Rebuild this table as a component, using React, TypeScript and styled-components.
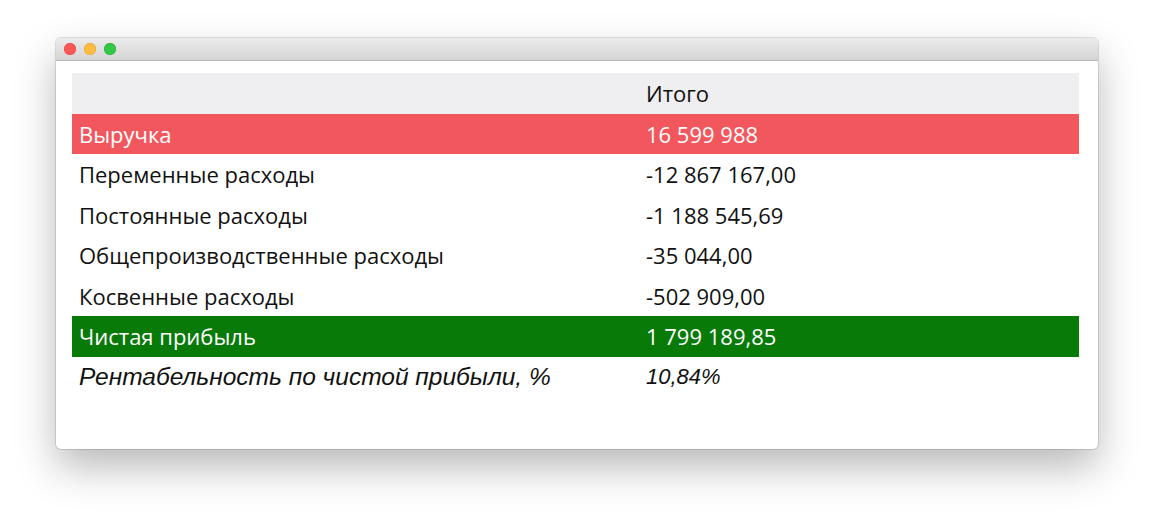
import React from "react";
import styled, { createGlobalStyle } from "styled-components";

const GlobalStyle = createGlobalStyle`
  html, body {
    margin: 0;
    padding: 0;
    background: #ffffff;
  }
`;

const Page = styled.div`
  width: 1154px;
  height: 524px;
  padding: 38px 56px 0 56px;
  box-sizing: border-box;
`;

const Window = styled.div`
  width: 1042px;
  height: 411px;
  background: #ffffff;
  border-radius: 5px;
  box-shadow: 0 0 0 1px rgba(0, 0, 0, 0.12), 0 18px 40px rgba(0, 0, 0, 0.28);
  overflow: hidden;
  display: flex;
  flex-direction: column;
`;

const TitleBar = styled.div`
  height: 22px;
  flex-shrink: 0;
  background: linear-gradient(#ebebeb, #d5d5d5);
  border-bottom: 1px solid #b8b8b8;
  display: flex;
  align-items: center;
  gap: 8px;
  padding-left: 8px;
`;

const Light = styled.span<{ $color: string; $border: string }>`
  width: 12px;
  height: 12px;
  border-radius: 50%;
  background: ${(p) => p.$color};
  box-shadow: inset 0 0 0 0.5px ${(p) => p.$border};
`;

const Content = styled.div`
  padding: 12px 19px 0 16px;
`;

const Table = styled.table`
  width: 100%;
  border-collapse: collapse;
  font-family: "Open Sans", "Noto Sans", sans-serif;
  font-size: 22px;
  color: #111;
`;

const Row = styled.tr<{ $bg?: string; $light?: boolean; $italic?: boolean }>`
  height: 40.5px;
  background: ${(p) => p.$bg || "transparent"};
  color: ${(p) => (p.$light ? "#ffffff" : "#111111")};
  font-family: ${(p) =>
    p.$italic ? '"Liberation Sans", Arial, sans-serif' : "inherit"};
  font-style: ${(p) => (p.$italic ? "italic" : "normal")};
  font-size: ${(p) => (p.$italic ? "24.5px" : "22px")};
`;

const Cell = styled.td<{ $small?: boolean }>`
  padding: 0 7px;
  vertical-align: middle;
  line-height: 1;
  ${(p) => (p.$small ? "font-size: 22px;" : "")}
  &:first-child {
    width: 553px;
  }
`;

const rows = [
  { label: "Переменные расходы", value: "-12 867 167,00" },
  { label: "Постоянные расходы", value: "-1 188 545,69" },
  { label: "Общепроизводственные расходы", value: "-35 044,00" },
  { label: "Косвенные расходы", value: "-502 909,00" },
];

export default function App() {
  return (
    <Page>
      <GlobalStyle />
      <Window>
        <TitleBar>
          <Light $color="#fc5753" $border="#df4744" />
          <Light $color="#fdbc40" $border="#de9f34" />
          <Light $color="#33c748" $border="#27aa35" />
        </TitleBar>
        <Content>
          <Table>
            <tbody>
              <Row $bg="#efeef0">
                <Cell />
                <Cell>Итого</Cell>
              </Row>
              <Row $bg="#f2575d" $light>
                <Cell>Выручка</Cell>
                <Cell>16 599 988</Cell>
              </Row>
              {rows.map((r) => (
                <Row key={r.label}>
                  <Cell>{r.label}</Cell>
                  <Cell>{r.value}</Cell>
                </Row>
              ))}
              <Row $bg="#077a08" $light>
                <Cell>Чистая прибыль</Cell>
                <Cell>1 799 189,85</Cell>
              </Row>
              <Row $italic>
                <Cell>Рентабельность по чистой прибыли, %</Cell>
                <Cell $small>10,84%</Cell>
              </Row>
            </tbody>
          </Table>
        </Content>
      </Window>
    </Page>
  );
}
